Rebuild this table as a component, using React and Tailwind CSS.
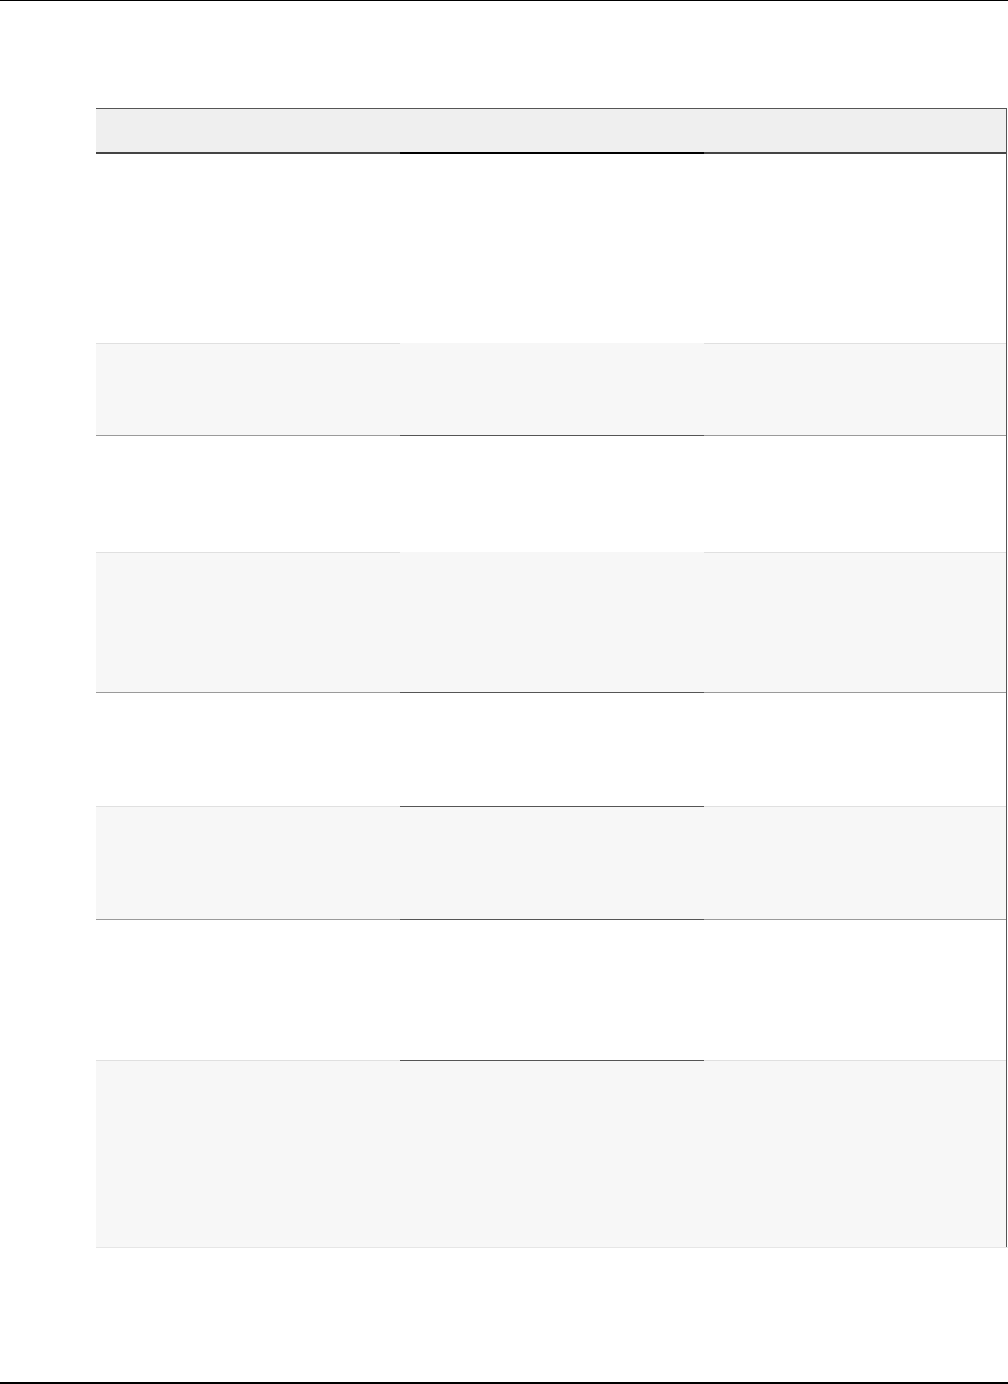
import React from 'react';

const borderClass = {
  none: '',
  light: 'border-t border-[#e0e0e0]',
  mid: 'border-t border-[#9a9a9a]',
  dark: 'border-t border-[#555555]',
};

const widths = ['w-[304px]', 'w-[304px]', 'w-[302px]'];

const rows = [
  { h: 'h-[189px]', bg: 'bg-white', borders: ['none', 'none', 'none'] },
  { h: 'h-[92px]', bg: 'bg-[#f7f7f7]', borders: ['light', 'none', 'light'] },
  { h: 'h-[117px]', bg: 'bg-white', borders: ['mid', 'dark', 'mid'] },
  { h: 'h-[140px]', bg: 'bg-[#f7f7f7]', borders: ['light', 'none', 'light'] },
  { h: 'h-[114px]', bg: 'bg-white', borders: ['mid', 'dark', 'mid'] },
  { h: 'h-[113px]', bg: 'bg-[#f7f7f7]', borders: ['light', 'dark', 'light'] },
  { h: 'h-[141px]', bg: 'bg-white', borders: ['mid', 'dark', 'mid'] },
  { h: 'h-[187px]', bg: 'bg-[#f7f7f7]', borders: ['light', 'dark', 'light'] },
];

export default function App() {
  return (
    <div className="h-[1384px] w-[1008px] bg-white border-t border-b-2 border-black overflow-hidden" style={{ fontFamily: '"Liberation Sans", Arial, sans-serif' }}>
      <div className="ml-[96px] mt-[107px] w-[911px]">
        {/* header */}
        <div className="flex border-t border-r border-[#555555] bg-[#efefef]">
          <div className={`${widths[0]} h-[45px] border-b-2 border-[#444444]`}></div>
          <div className={`${widths[1]} h-[45px] border-b-2 border-black`}></div>
          <div className={`${widths[2]} h-[45px] border-b-2 border-[#444444]`}></div>
        </div>
        {/* body */}
        <div className="border-r border-[#555555]">
          {rows.map((row, i) => (
            <div key={i} className={`flex ${row.bg}`}>
              {row.borders.map((b, j) => (
                <div key={j} className={`${widths[j]} ${row.h} ${borderClass[b]}`}></div>
              ))}
            </div>
          ))}
        </div>
        <div className="h-px w-[912px] bg-[#e6e6e6]"></div>
      </div>
    </div>
  );
}
